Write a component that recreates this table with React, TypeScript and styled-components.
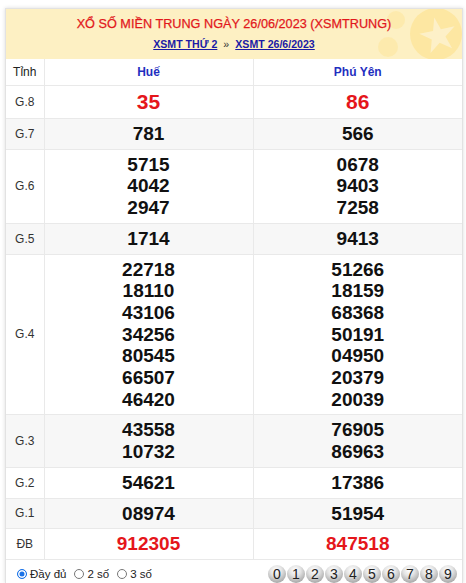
import React from "react";
import styled, { createGlobalStyle } from "styled-components";

const Global = createGlobalStyle`
  html, body { margin: 0; padding: 0; background: #fff; }
  body { font-family: "Liberation Sans", Arial, sans-serif; }
`;

const Box = styled.div`
  margin: 8px 3px 0 5px;
  border: 1px solid #e2e2e2;
  border-bottom: none;
  box-shadow: 0 0 4px rgba(0, 0, 0, 0.14);
  background: #fff;
`;

const Header = styled.div`
  position: relative;
  overflow: hidden;
  background: #fdf0c3;
  height: 50px;
  box-sizing: border-box;
  padding-top: 7px;
  text-align: center;
`;

const Title = styled.h2`
  position: relative;
  z-index: 1;
  margin: 0;
  font-size: 12.7px;
  font-weight: normal;
  line-height: 17px;
  color: #e2181c;
  -webkit-text-stroke: 0.25px #e2181c;
`;

const Sub = styled.div`
  position: relative;
  z-index: 1;
  margin-top: 4px;
  font-size: 10.6px;
  font-weight: bold;
  line-height: 14px;
  color: #555;
`;

const SubLink = styled.a`
  color: #1a1aa6;
  text-decoration: underline;
`;

const Sep = styled.span`
  margin: 0 6px;
  font-weight: normal;
  color: #333;
`;

const Deco = styled.svg`
  position: absolute;
  right: 0;
  top: 0;
`;

const Table = styled.table`
  width: 100%;
  border-collapse: collapse;
  table-layout: fixed;
`;

const Row = styled.tr<{ $alt?: boolean }>`
  background: ${(p) => (p.$alt ? "#f7f7f7" : "#fff")};
`;

const HeadCell = styled.th<{ $name?: boolean }>`
  border: 1px solid #e9e9e9;
  border-top: none;
  height: 26px;
  padding: 0;
  font-size: 12px;
  font-weight: ${(p) => (p.$name ? "bold" : "normal")};
  color: ${(p) => (p.$name ? "#1f2fc0" : "#222")};
  text-align: center;
  &:first-child { border-left: none; }
  &:last-child { border-right: none; }
`;

const Label = styled.td`
  border: 1px solid #e9e9e9;
  border-left: none;
  padding: 0;
  font-size: 12px;
  color: #333;
  text-align: center;
`;

const Cell = styled.td`
  border: 1px solid #e9e9e9;
  padding: 4px 0;
  text-align: center;
  &:last-child { border-right: none; }
`;

const Num = styled.div<{ $red?: boolean; $big?: boolean }>`
  font-size: ${(p) => (p.$big ? "21px" : "19px")};
  line-height: ${(p) => (p.$big ? "24px" : "21.7px")};
  font-weight: bold;
  color: ${(p) => (p.$red ? "#e5161b" : "#111")};
`;

const Footer = styled.div`
  display: flex;
  align-items: flex-start;
  justify-content: space-between;
  height: 18px;
  padding: 5px 5px 0 11px;
  overflow: hidden;
`;

const Radios = styled.div`
  display: flex;
  align-items: center;
  gap: 8px;
  padding-top: 2px;
  font-size: 11.5px;
  line-height: 14px;
  color: #222;
`;

const RadioLabel = styled.label`
  display: flex;
  align-items: center;
  gap: 3px;
`;

const RadioDot = styled.span<{ $on?: boolean }>`
  display: inline-block;
  width: 10px;
  height: 10px;
  border-radius: 50%;
  box-sizing: border-box;
  border: 1px solid ${(p) => (p.$on ? "#1a73e8" : "#777")};
  background: ${(p) => (p.$on ? "#1a73e8" : "#fff")};
  box-shadow: ${(p) => (p.$on ? "inset 0 0 0 1.5px #fff" : "none")};
`;

const Balls = styled.div`
  display: flex;
  gap: 1px;
`;

const Ball = styled.span`
  display: inline-flex;
  align-items: center;
  justify-content: center;
  width: 18px;
  height: 18px;
  border-radius: 50%;
  background: radial-gradient(circle at 45% 30%, #ffffff 0%, #e4e4e4 35%, #a5a5a5 80%, #888 100%);
  font-size: 14px;
  color: #222;
`;

type Prize = { label: string; a: string[]; b: string[]; red?: boolean; big?: boolean };

const prizes: Prize[] = [
  { label: "G.8", a: ["35"], b: ["86"], red: true, big: true },
  { label: "G.7", a: ["781"], b: ["566"] },
  { label: "G.6", a: ["5715", "4042", "2947"], b: ["0678", "9403", "7258"] },
  { label: "G.5", a: ["1714"], b: ["9413"] },
  {
    label: "G.4",
    a: ["22718", "18110", "43106", "34256", "80545", "66507", "46420"],
    b: ["51266", "18159", "68368", "50191", "04950", "20379", "20039"],
  },
  { label: "G.3", a: ["43558", "10732"], b: ["76905", "86963"] },
  { label: "G.2", a: ["54621"], b: ["17386"] },
  { label: "G.1", a: ["08974"], b: ["51954"] },
  { label: "ĐB", a: ["912305"], b: ["847518"], red: true },
];

export default function App() {
  return (
    <>
      <Global />
      <Box>
        <Header>
          <Deco width="90" height="50" viewBox="0 0 90 50">
            <circle cx="24" cy="11" r="9" fill="#fde9a8" opacity="0.8" />
            <circle cx="16" cy="38" r="10" fill="#fde9a8" opacity="0.8" />
            <circle cx="64" cy="25" r="26" fill="#fde7a2" />
            <polygon
              points="66,8 70,21 84,21 73,29 77,42 66,34 55,42 59,29 48,21 62,21"
              fill="#fdf0c8"
              transform="rotate(-12 66 26)"
            />
          </Deco>
          <Title>XỔ SỐ MIỀN TRUNG NGÀY 26/06/2023 (XSMTRUNG)</Title>
          <Sub>
            <SubLink href="#">XSMT THỨ 2</SubLink>
            <Sep>»</Sep>
            <SubLink href="#">XSMT 26/6/2023</SubLink>
          </Sub>
        </Header>
        <Table>
          <colgroup>
            <col style={{ width: 38 }} />
            <col style={{ width: 209 }} />
            <col />
          </colgroup>
          <thead>
            <tr>
              <HeadCell>Tỉnh</HeadCell>
              <HeadCell $name>Huế</HeadCell>
              <HeadCell $name>Phú Yên</HeadCell>
            </tr>
          </thead>
          <tbody>
            {prizes.map((p, i) => (
              <Row key={p.label} $alt={i % 2 === 1}>
                <Label>{p.label}</Label>
                <Cell>
                  {p.a.map((n) => (
                    <Num key={n} $red={p.red} $big={p.big}>{n}</Num>
                  ))}
                </Cell>
                <Cell>
                  {p.b.map((n) => (
                    <Num key={n} $red={p.red} $big={p.big}>{n}</Num>
                  ))}
                </Cell>
              </Row>
            ))}
          </tbody>
        </Table>
        <Footer>
          <Radios>
            <RadioLabel><RadioDot $on />Đầy đủ</RadioLabel>
            <RadioLabel><RadioDot />2 số</RadioLabel>
            <RadioLabel><RadioDot />3 số</RadioLabel>
          </Radios>
          <Balls>
            {["0", "1", "2", "3", "4", "5", "6", "7", "8", "9"].map((d) => (
              <Ball key={d}>{d}</Ball>
            ))}
          </Balls>
        </Footer>
      </Box>
    </>
  );
}
